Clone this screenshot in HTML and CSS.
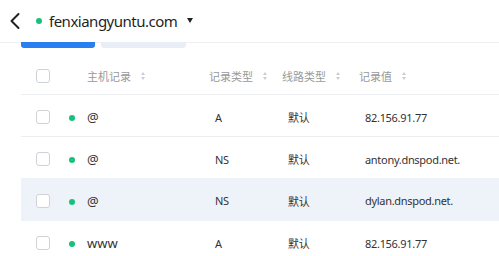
FILE: index.html
```html
<!DOCTYPE html>
<html>
<head>
<meta charset="utf-8">
<link rel="stylesheet" href="styles.css">
</head>
<body>
<div class="page">
  <header class="topbar">
    <svg class="back" width="12" height="18" viewBox="0 0 12 18"><path d="M9.5 2 L2.5 9 L9.5 16" fill="none" stroke="#222" stroke-width="2" stroke-linecap="round" stroke-linejoin="round"/></svg>
    <span class="status-dot"></span>
    <span class="domain">fenxiangyuntu.com</span>
    <span class="caret"></span>
  </header>
  <div class="actions">
    <span class="btn btn-primary"></span>
    <span class="btn btn-light"></span>
  </div>
  <div class="table">
    <div class="row head">
      <div class="c-check"><span class="box"></span></div>
      <div class="c-dot"></div>
      <div class="c-host">主机记录<i class="sort"></i></div>
      <div class="c-type">记录类型<i class="sort"></i></div>
      <div class="c-line">线路类型<i class="sort"></i></div>
      <div class="c-val">记录值<i class="sort"></i></div>
    </div>
    <div class="row">
      <div class="c-check"><span class="box"></span></div>
      <div class="c-dot"><span class="dot"></span></div>
      <div class="c-host">@</div>
      <div class="c-type v">A</div>
      <div class="c-line v">默认</div>
      <div class="c-val v">82.156.91.77</div>
    </div>
    <div class="row">
      <div class="c-check"><span class="box"></span></div>
      <div class="c-dot"><span class="dot"></span></div>
      <div class="c-host">@</div>
      <div class="c-type v">NS</div>
      <div class="c-line v">默认</div>
      <div class="c-val v">antony.dnspod.net.</div>
    </div>
    <div class="row hover">
      <div class="c-check"><span class="box"></span></div>
      <div class="c-dot"><span class="dot"></span></div>
      <div class="c-host">@</div>
      <div class="c-type v">NS</div>
      <div class="c-line v">默认</div>
      <div class="c-val v">dylan.dnspod.net.</div>
    </div>
    <div class="row">
      <div class="c-check"><span class="box"></span></div>
      <div class="c-dot"><span class="dot"></span></div>
      <div class="c-host">www</div>
      <div class="c-type v">A</div>
      <div class="c-line v">默认</div>
      <div class="c-val v">82.156.91.77</div>
    </div>
  </div>
</div>
</body>
</html>
```
FILE: styles.css
```css
* { box-sizing: border-box; }
html, body { margin: 0; padding: 0; background: #fff; }
body { font-family: "Noto Sans", "Noto Sans CJK SC", sans-serif; color: #333; overflow: hidden; }
.page { width: 499px; height: 256px; }
.topbar {
  height: 43px;
  display: flex;
  align-items: center;
  padding-left: 9px;
  border-bottom: 1px solid #eef0f3;
  background: #fff;
}
.back { display: block; margin-right: 15px; }
.status-dot { width: 6px; height: 6px; border-radius: 50%; background: #15c27a; margin-right: 7px; }
.domain { font-size: 15px; color: #1f1f1f; letter-spacing: -0.5px; }
.caret {
  width: 0; height: 0; margin-left: 10px; margin-top: -2px;
  border-left: 3.5px solid transparent; border-right: 3.5px solid transparent; border-top: 5px solid #222;
}
.actions { display: flex; gap: 6px; padding-left: 21px; margin-top: -1px; height: 6px; }
.btn { display: block; height: 6px; border-radius: 0 0 3px 3px; }
.btn-primary { width: 74px; background: #2a7ff0; }
.btn-light { width: 85px; background: #e9edf5; }
.table { margin-left: 21px; }
.row { display: flex; align-items: center; height: 42px; padding-top: 3px; border-bottom: 1px solid #eceef1; font-size: 11px; }
.row:nth-child(4) { height: 43px; }
.row.head { height: 47px; padding-top: 9px; color: #999; font-size: 11px; }
.row.hover { background: #eef2f9; border-bottom-color: #eef2f9; margin-top: -1px; }
.c-check { width: 47px; padding-left: 15px; display: flex; }
.box { width: 14px; height: 14px; border: 1px solid #cfd3d8; border-radius: 3px; background: #fff; }
.c-dot { width: 19px; display: flex; padding-left: 1px; }
.dot { width: 6px; height: 6px; border-radius: 50%; background: #15c27a; margin-top: 2px; }
.c-host { width: 122px; font-size: 13px; color: #333; }
.head .c-host { font-size: 11px; color: #999; }
.c-type { width: 73px; }
.c-line { width: 77px; }
.c-val { flex: 1; }
.v { color: #333; padding-left: 6px; letter-spacing: -0.3px; }
.sort {
  display: inline-block; width: 5px; height: 8px; margin-left: 10px; vertical-align: middle; position: relative; top: -2px;
}
.sort::before, .sort::after {
  content: ""; position: absolute; left: 0; width: 0; height: 0;
  border-left: 2.5px solid transparent; border-right: 2.5px solid transparent;
}
.sort::before { top: 0; border-bottom: 3px solid #c9ced8; }
.sort::after { bottom: 0; border-top: 3px solid #c9ced8; }
```
